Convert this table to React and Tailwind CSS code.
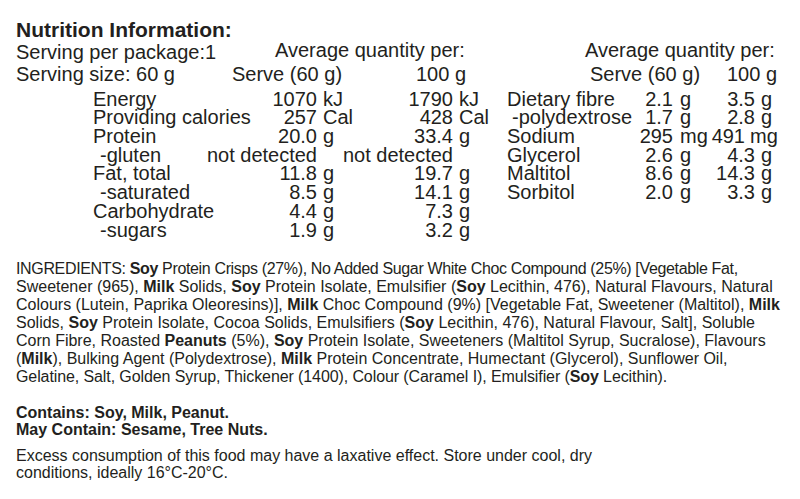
import React from "react";

const leftRows = [
  { label: "Energy", s: "1070", su: "kJ", h: "1790", hu: "kJ" },
  { label: "Providing calories", s: "257", su: "Cal", h: "428", hu: "Cal" },
  { label: "Protein", s: "20.0", su: "g", h: "33.4", hu: "g" },
  { label: "-gluten", sub: true, s: "not detected", su: "", h: "not detected", hu: "" },
  { label: "Fat, total", s: "11.8", su: "g", h: "19.7", hu: "g" },
  { label: "-saturated", sub: true, s: "8.5", su: "g", h: "14.1", hu: "g" },
  { label: "Carbohydrate", s: "4.4", su: "g", h: "7.3", hu: "g" },
  { label: "-sugars", sub: true, s: "1.9", su: "g", h: "3.2", hu: "g" },
];

const rightRows = [
  { label: "Dietary fibre", s: "2.1", su: "g", h: "3.5", hu: "g" },
  { label: "-polydextrose", sub: true, s: "1.7", su: "g", h: "2.8", hu: "g" },
  { label: "Sodium", s: "295", su: "mg", h: "491", hu: "mg", shift: true },
  { label: "Glycerol", s: "2.6", su: "g", h: "4.3", hu: "g" },
  { label: "Maltitol", s: "8.6", su: "g", h: "14.3", hu: "g" },
  { label: "Sorbitol", s: "2.0", su: "g", h: "3.3", hu: "g" },
];

const LeftRow = ({ r }) => (
  <div className="flex h-[18.7px] leading-[18.7px] whitespace-nowrap">
    <span className={"w-[160px] " + (r.sub ? "pl-[7px]" : "")}>{r.label}</span>
    <span className="w-[64px] flex justify-end">{r.s}</span>
    <span className="w-[72px] pl-[6px]">{r.su}</span>
    <span className="w-[64px] flex justify-end">{r.h}</span>
    <span className="w-[54px] pl-[6px]">{r.hu}</span>
  </div>
);

const RightRow = ({ r }) => (
  <div className="flex h-[18.7px] leading-[18.7px] whitespace-nowrap">
    <span className={"w-[130px] " + (r.sub ? "pl-[5px]" : "")}>{r.label}</span>
    <span className="w-[36px] flex justify-end">{r.s}</span>
    <span className="w-[46px] pl-[7px]">{r.su}</span>
    <span className={"w-[36px] flex justify-end " + (r.shift ? "pr-[10px]" : "")}>{r.h}</span>
    <span className={"pl-[6px] " + (r.shift ? "ml-[-11px]" : "")}>{r.hu}</span>
  </div>
);

export default function App() {
  return (
    <div className="w-[800px] h-[499px] bg-white text-[#231f20] font-['Liberation_Sans',Arial,sans-serif] pl-[16px] pt-[19px] overflow-hidden">
      <h1 className="text-[21px] leading-[22px] font-bold h-[22px]">Nutrition Information:</h1>

      <div className="flex items-start text-[20px] leading-[22px] whitespace-nowrap">
        <span className="w-[259px]">Serving per package:1</span>
        <span className="w-[310px] -mt-[2px]">Average quantity per:</span>
        <span className="-mt-[2px]">Average quantity per:</span>
      </div>
      <div className="flex text-[20px] leading-[22px] whitespace-nowrap">
        <span className="w-[216px]">Serving size: 60 g</span>
        <span className="w-[184px]">Serve (60 g)</span>
        <span className="w-[174px]">100 g</span>
        <span className="w-[137px]">Serve (60 g)</span>
        <span>100 g</span>
      </div>

      <div className="flex text-[20px] pl-[77px] mt-[4.7px]">
        <div className="w-[414px]">
          {leftRows.map((r) => (
            <LeftRow key={r.label} r={r} />
          ))}
        </div>
        <div>
          {rightRows.map((r) => (
            <RightRow key={r.label} r={r} />
          ))}
        </div>
      </div>

      <div className="mt-[21px] text-[16px] leading-[18px] whitespace-nowrap">
        <div className="tracking-[-0.35px]">
          INGREDIENTS: <b>Soy</b> Protein Crisps (27%), No Added Sugar White Choc Compound (25%) [Vegetable Fat,
        </div>
        <div>
          Sweetener (965), <b>Milk</b> Solids, <b>Soy</b> Protein Isolate, Emulsifier (<b>Soy</b> Lecithin, 476), Natural Flavours, Natural
        </div>
        <div>
          Colours (Lutein, Paprika Oleoresins)], <b>Milk</b> Choc Compound (9%) [Vegetable Fat, Sweetener (Maltitol), <b>Milk</b>
        </div>
        <div>
          Solids, <b>Soy</b> Protein Isolate, Cocoa Solids, Emulsifiers (<b>Soy</b> Lecithin, 476), Natural Flavour, Salt], Soluble
        </div>
        <div>
          Corn Fibre, Roasted <b>Peanuts</b> (5%), <b>Soy</b> Protein Isolate, Sweeteners (Maltitol Syrup, Sucralose), Flavours
        </div>
        <div>
          (<b>Milk</b>), Bulking Agent (Polydextrose), <b>Milk</b> Protein Concentrate, Humectant (Glycerol), Sunflower Oil,
        </div>
        <div className="tracking-[-0.1px]">
          Gelatine, Salt, Golden Syrup, Thickener (1400), Colour (Caramel I), Emulsifier (<b>Soy</b> Lecithin).
        </div>
      </div>

      <div className="mt-[17.5px] text-[16px] leading-[17px] font-bold whitespace-nowrap">
        <div>Contains: Soy, Milk, Peanut.</div>
        <div>May Contain: Sesame, Tree Nuts.</div>
      </div>

      <div className="mt-[9px] text-[16px] leading-[17px] whitespace-nowrap">
        <div>Excess consumption of this food may have a laxative effect. Store under cool, dry</div>
        <div>conditions, ideally 16°C-20°C.</div>
      </div>
    </div>
  );
}
